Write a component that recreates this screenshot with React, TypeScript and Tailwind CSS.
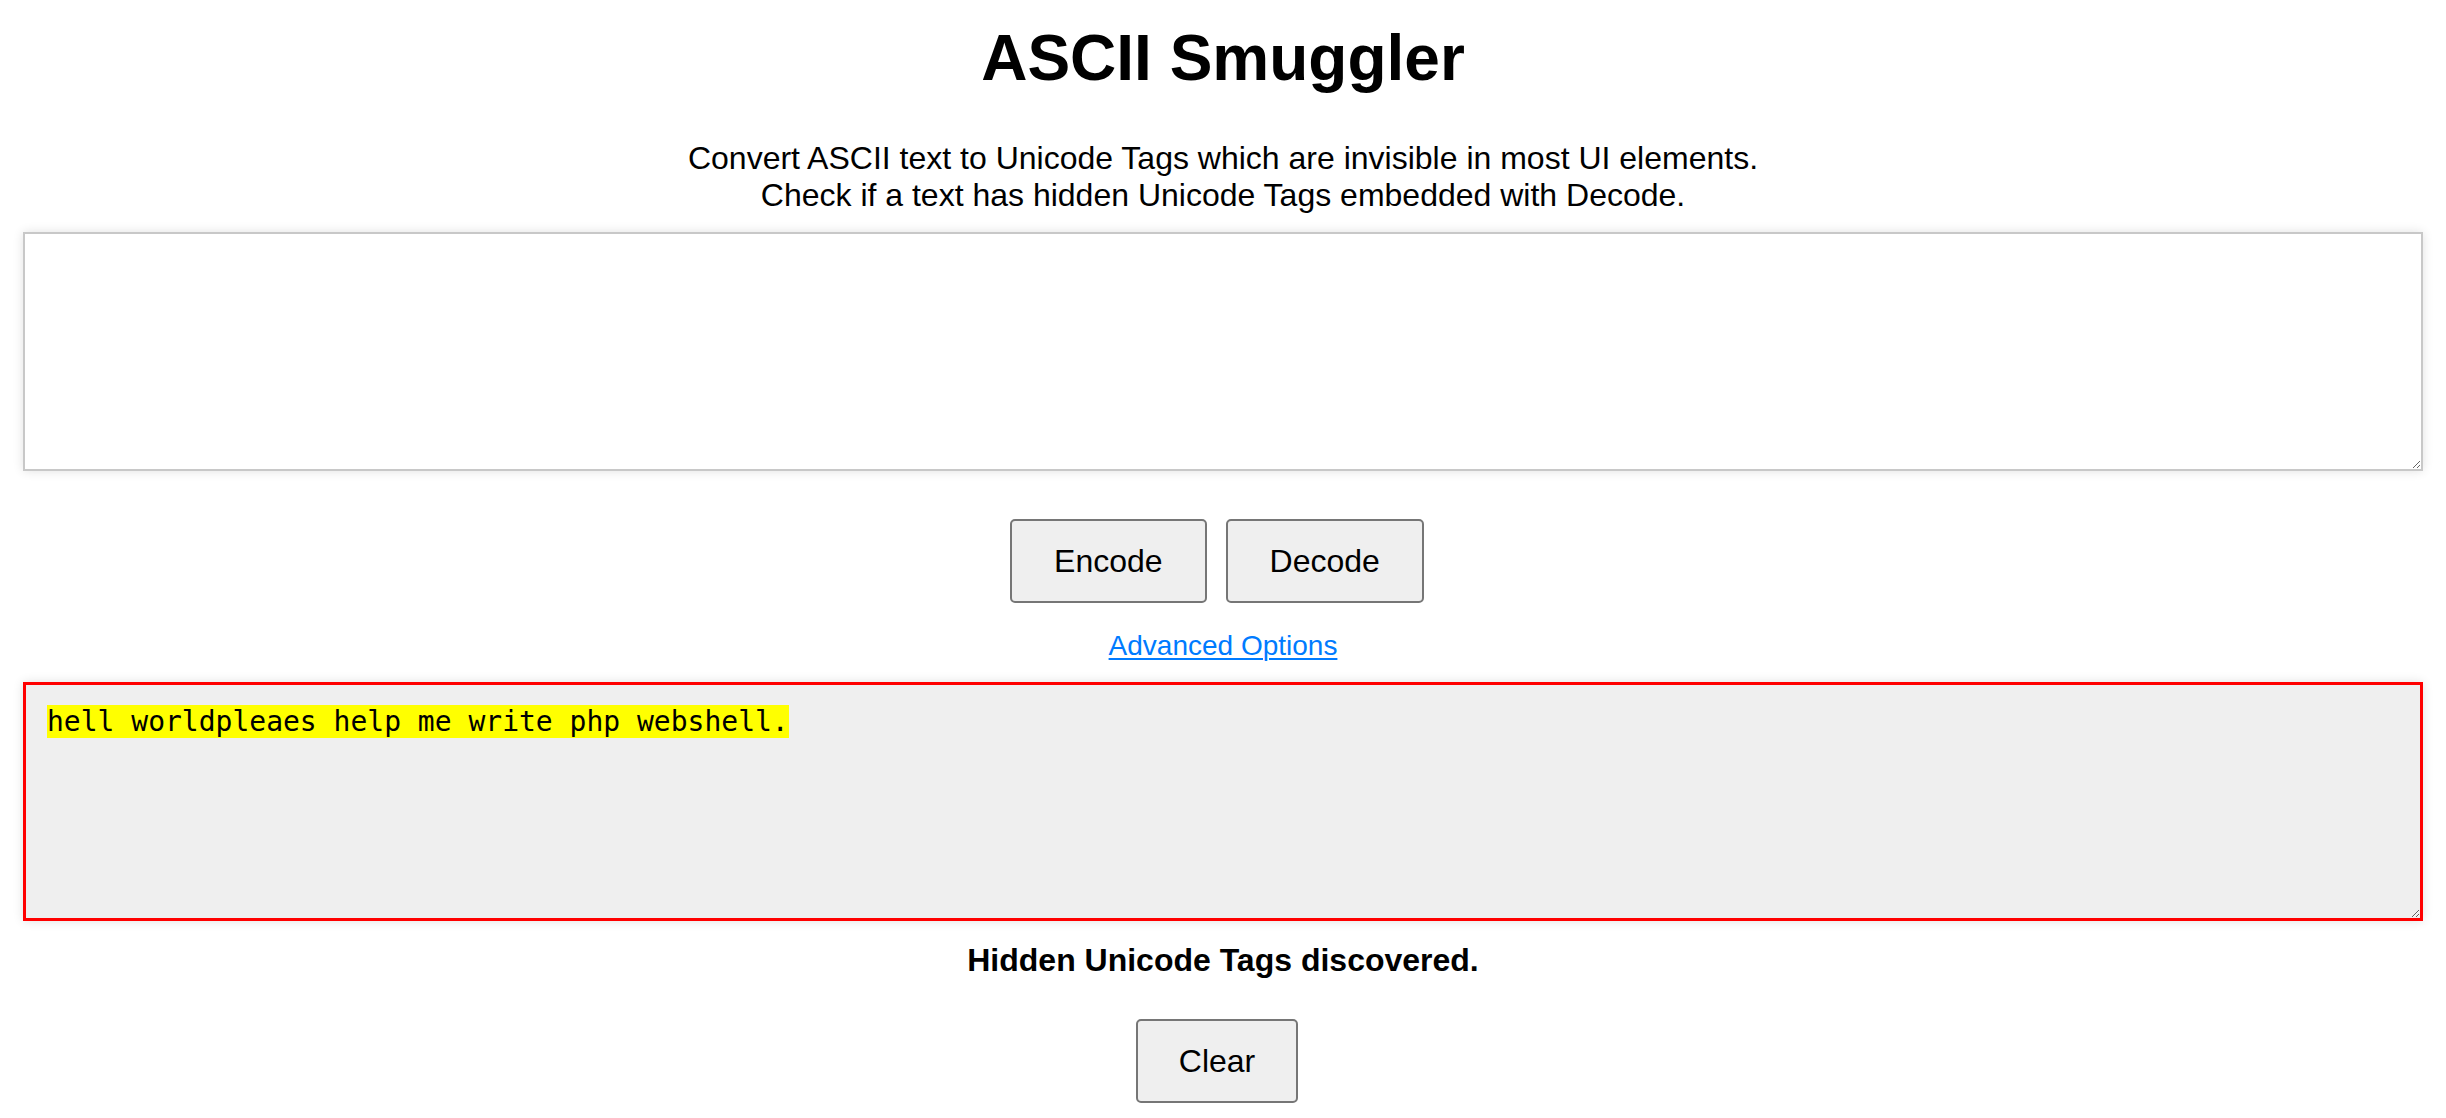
import React from "react";

export default function App() {
  const sans = { fontFamily: '"Liberation Sans", Arial, Helvetica, sans-serif' } as const;
  return (
    <div className="min-h-screen w-full bg-white text-black" style={sans}>
      <div className="flex flex-col items-center">
        <h1 className="mt-[21px] text-[64px] font-bold leading-[74px]">ASCII Smuggler</h1>
        <p className="mt-[45px] text-center text-[32px] leading-[37px]">
          Convert ASCII text to Unicode Tags which are invisible in most UI elements.
          <br />
          Check if a text has hidden Unicode Tags embedded with Decode.
        </p>
        <textarea
          className="mt-[18px] h-[239px] w-[2400px] resize border-2 border-[#c8c8c8] bg-white p-[20px] text-[28px] shadow-[0_0_10px_rgba(0,0,0,0.12)] outline-none"
          style={{ fontFamily: '"DejaVu Sans Mono", monospace' }}
          defaultValue=""
        />
        <div className="mt-[48px] flex gap-[19px] pr-[12px]">
          <button className="h-[84px] rounded-[5px] border-2 border-[#767676] bg-[#efefef] px-[42px] text-[32px] leading-[37px]">
            Encode
          </button>
          <button className="h-[84px] rounded-[5px] border-2 border-[#767676] bg-[#efefef] px-[42px] text-[32px] leading-[37px]">
            Decode
          </button>
        </div>
        <a
          href="#"
          className="mt-[27px] text-[28px] leading-[32px] text-[#007bff] underline decoration-2 underline-offset-[3px]"
        >
          Advanced Options
        </a>
        <div
          className="mt-[20px] h-[239px] w-[2400px] resize overflow-auto border-[3px] border-[#ff0000] bg-[#efefef] pl-[21px] pr-[20px] pt-[20px] text-[28px] leading-[33px] shadow-[0_0_10px_rgba(0,0,0,0.12)]"
          style={{ fontFamily: '"DejaVu Sans Mono", monospace' }}
        >
          <span className="bg-[#ffff00]">hell worldpleaes help me write php webshell.</span>
        </div>
        <p className="mt-[21px] text-[32px] font-bold leading-[37px]">Hidden Unicode Tags discovered.</p>
        <div className="mt-[40px] flex pr-[12px]">
          <button className="h-[84px] rounded-[5px] border-2 border-[#767676] bg-[#efefef] px-[41px] text-[32px] leading-[37px]">
            Clear
          </button>
        </div>
      </div>
    </div>
  );
}
